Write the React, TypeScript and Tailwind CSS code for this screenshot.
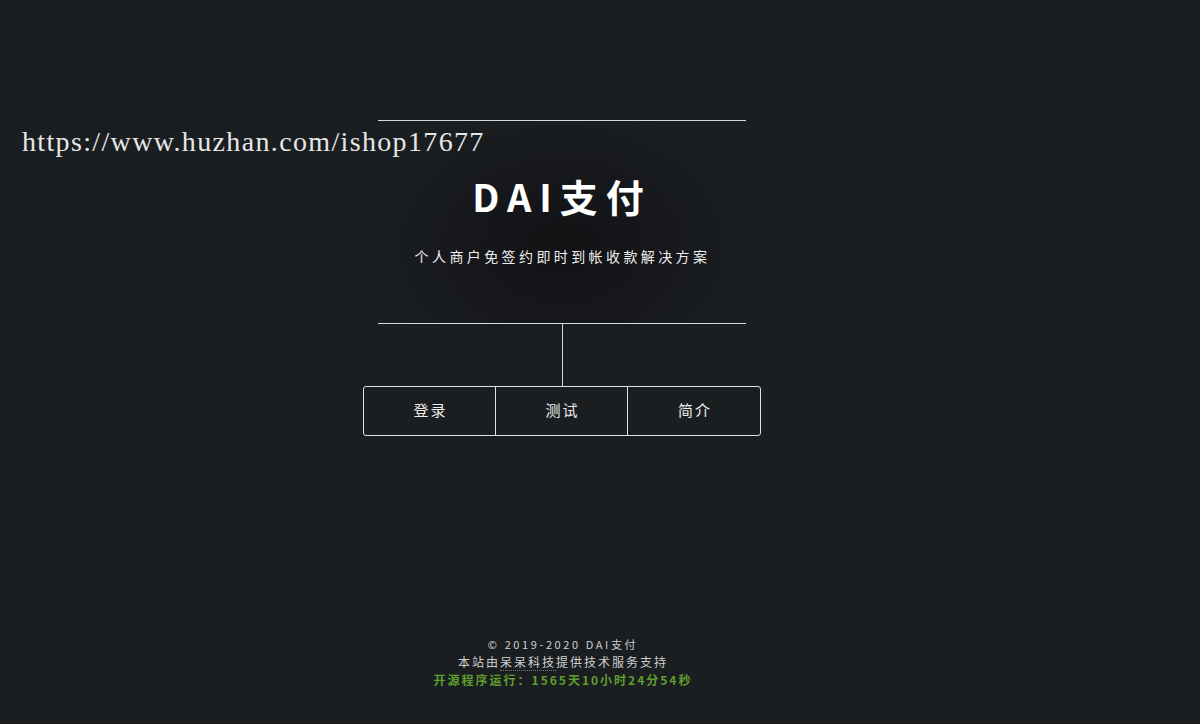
export default function App() {
  const font = "font-['Noto_Sans_CJK_SC','Noto_Sans',sans-serif]";
  return (
    <div className={`relative min-h-screen w-full overflow-hidden bg-[#1b1e21] ${font}`}>
      <div className="w-[1124px] flex flex-col items-center pt-[120px]">
        <div className="w-[368px] h-[204px] border-y border-[#d8d8d8] flex flex-col items-center bg-[radial-gradient(ellipse_190px_140px_at_50%_62%,#111214_0%,#16181b_55%,transparent_100%)]">
          <h1 className="mt-[49px] text-[38px] leading-[52px] font-bold tracking-[8px] text-white">
            DAI支付
          </h1>
          <p className="mt-[24px] pl-[1px] text-[14px] leading-[20px] tracking-[3.4px] text-[#eeeeee]">
            个人商户免签约即时到帐收款解决方案
          </p>
        </div>
        <div className="w-px h-[62px] bg-[#d8d8d8]" />
        <div className="w-[398px] h-[50px] border border-[#e0e0e0] rounded-[3px] grid grid-cols-3 text-[15px] tracking-[2px] text-[#eeeeee]">
          <div className="flex items-center justify-center border-r border-[#e0e0e0] pl-[2px] pb-[1px]">登录</div>
          <div className="flex items-center justify-center border-r border-[#e0e0e0] pl-[2px] pb-[1px]">测试</div>
          <div className="flex items-center justify-center pl-[2px] pb-[1px]">简介</div>
        </div>
        <footer className="mt-[200px] flex flex-col items-center text-[#cfcfcf]">
          <p className="text-[11px] leading-[17px] tracking-[2.6px] pl-[2px]">© 2019-2020 DAI支付</p>
          <p className="text-[12px] leading-[18px] tracking-[2px] pl-[2px]">
            本站由<span className="border-b border-dotted border-[#777]">呆呆科技</span>提供技术服务支持
          </p>
          <p className="text-[12px] leading-[18px] tracking-[2px] pl-[2px] font-bold text-[#5f9e2c]">
            开源程序运行：1565天10小时24分54秒
          </p>
        </footer>
      </div>
      <div className="absolute left-[22px] top-[124px] font-['Liberation_Serif',serif] text-[28px] leading-[36px] tracking-[1.35px] text-[#e6e6e6]">
        https://www.huzhan.com/ishop17677
      </div>
    </div>
  );
}
